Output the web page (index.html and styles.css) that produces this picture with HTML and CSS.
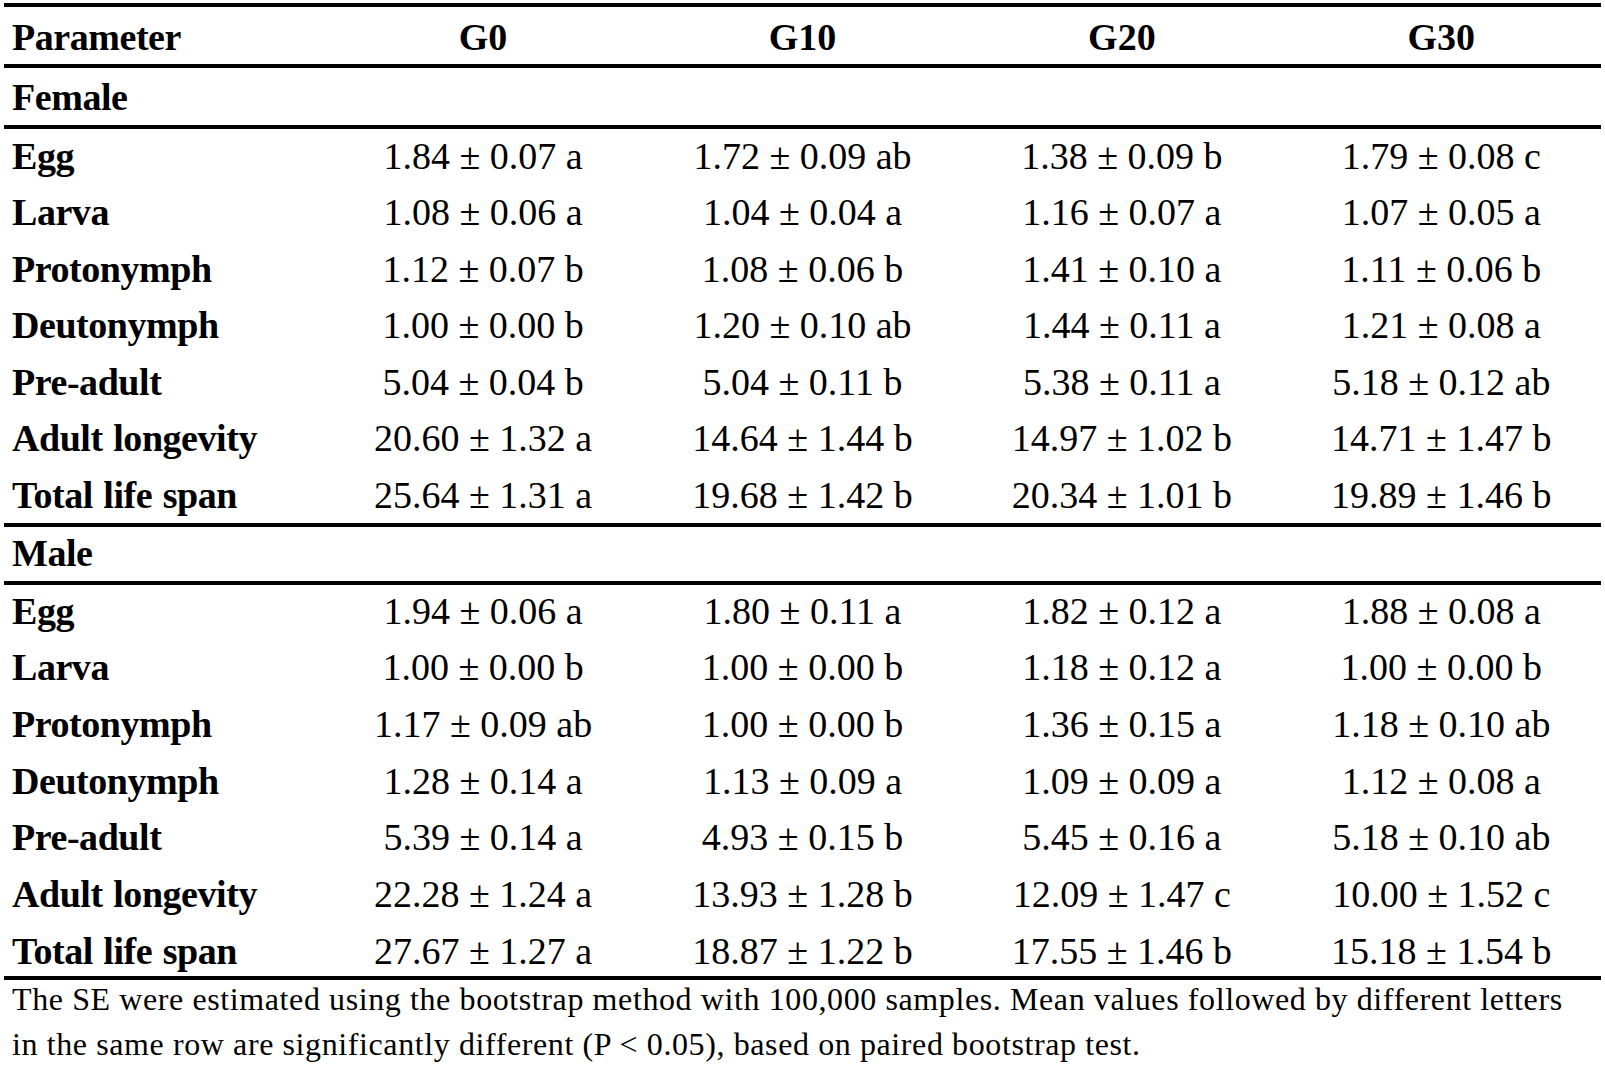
FILE: index.html
```html
<!DOCTYPE html>
<html>
<head>
<meta charset="utf-8">
<link rel="stylesheet" href="styles.css">
</head>
<body>
<div class="table">
  <div class="row head">
    <div class="c p">Parameter</div><div class="c">G0</div><div class="c">G10</div><div class="c">G20</div><div class="c">G30</div>
  </div>
  <div class="row group fem">
    <div class="c p">Female</div>
  </div>
  <div class="row f"><div class="c p">Egg</div><div class="c">1.84 ± 0.07 a</div><div class="c">1.72 ± 0.09 ab</div><div class="c">1.38 ± 0.09 b</div><div class="c">1.79 ± 0.08 c</div></div>
  <div class="row f"><div class="c p">Larva</div><div class="c">1.08 ± 0.06 a</div><div class="c">1.04 ± 0.04 a</div><div class="c">1.16 ± 0.07 a</div><div class="c">1.07 ± 0.05 a</div></div>
  <div class="row f"><div class="c p">Protonymph</div><div class="c">1.12 ± 0.07 b</div><div class="c">1.08 ± 0.06 b</div><div class="c">1.41 ± 0.10 a</div><div class="c">1.11 ± 0.06 b</div></div>
  <div class="row f"><div class="c p">Deutonymph</div><div class="c">1.00 ± 0.00 b</div><div class="c">1.20 ± 0.10 ab</div><div class="c">1.44 ± 0.11 a</div><div class="c">1.21 ± 0.08 a</div></div>
  <div class="row f"><div class="c p">Pre-adult</div><div class="c">5.04 ± 0.04 b</div><div class="c">5.04 ± 0.11 b</div><div class="c">5.38 ± 0.11 a</div><div class="c">5.18 ± 0.12 ab</div></div>
  <div class="row f"><div class="c p">Adult longevity</div><div class="c">20.60 ± 1.32 a</div><div class="c">14.64 ± 1.44 b</div><div class="c">14.97 ± 1.02 b</div><div class="c">14.71 ± 1.47 b</div></div>
  <div class="row f lastf"><div class="c p">Total life span</div><div class="c">25.64 ± 1.31 a</div><div class="c">19.68 ± 1.42 b</div><div class="c">20.34 ± 1.01 b</div><div class="c">19.89 ± 1.46 b</div></div>
  <div class="row group male">
    <div class="c p">Male</div>
  </div>
  <div class="row m"><div class="c p">Egg</div><div class="c">1.94 ± 0.06 a</div><div class="c">1.80 ± 0.11 a</div><div class="c">1.82 ± 0.12 a</div><div class="c">1.88 ± 0.08 a</div></div>
  <div class="row m"><div class="c p">Larva</div><div class="c">1.00 ± 0.00 b</div><div class="c">1.00 ± 0.00 b</div><div class="c">1.18 ± 0.12 a</div><div class="c">1.00 ± 0.00 b</div></div>
  <div class="row m"><div class="c p">Protonymph</div><div class="c">1.17 ± 0.09 ab</div><div class="c">1.00 ± 0.00 b</div><div class="c">1.36 ± 0.15 a</div><div class="c">1.18 ± 0.10 ab</div></div>
  <div class="row m"><div class="c p">Deutonymph</div><div class="c">1.28 ± 0.14 a</div><div class="c">1.13 ± 0.09 a</div><div class="c">1.09 ± 0.09 a</div><div class="c">1.12 ± 0.08 a</div></div>
  <div class="row m"><div class="c p">Pre-adult</div><div class="c">5.39 ± 0.14 a</div><div class="c">4.93 ± 0.15 b</div><div class="c">5.45 ± 0.16 a</div><div class="c">5.18 ± 0.10 ab</div></div>
  <div class="row m"><div class="c p">Adult longevity</div><div class="c">22.28 ± 1.24 a</div><div class="c">13.93 ± 1.28 b</div><div class="c">12.09 ± 1.47 c</div><div class="c">10.00 ± 1.52 c</div></div>
  <div class="row m lastm"><div class="c p">Total life span</div><div class="c">27.67 ± 1.27 a</div><div class="c">18.87 ± 1.22 b</div><div class="c">17.55 ± 1.46 b</div><div class="c">15.18 ± 1.54 b</div></div>
  <p class="note">The SE were estimated using the bootstrap method with 100,000 samples. Mean values followed by different letters in the same row are significantly different (P &lt; 0.05), based on paired bootstrap test.</p>
</div>
</body>
</html>
```
FILE: styles.css
```css
html, body {
  margin: 0;
  padding: 0;
  background: #fff;
}
body {
  font-family: "Liberation Serif", "Times New Roman", serif;
  color: #000;
}
.table {
  width: 1597px;
  margin: 3px 0 0 4px;
}
.row {
  display: grid;
  grid-template-columns: repeat(5, 1fr);
  align-items: start;
  font-size: 38px;
  line-height: 44px;
  box-sizing: border-box;
}
.c {
  text-align: center;
  white-space: nowrap;
}
.c.p {
  text-align: left;
  padding-left: 8px;
  font-weight: bold;
  letter-spacing: -0.45px;
  word-spacing: 1.5px;
}
.head {
  border-top: 4px solid #000;
  border-bottom: 4px solid #000;
  height: 65px;
  padding-top: 7.5px;
  font-weight: bold;
}
.fem {
  height: 61px;
  padding-top: 7px;
  border-bottom: 4px solid #000;
}
.f {
  height: 56.53px;
  padding-top: 4.5px;
}
.lastf {
  height: 54.8px;
}
.male {
  border-top: 4px solid #000;
  border-bottom: 4px solid #000;
  height: 62.5px;
  padding-top: 4.2px;
}
.m {
  height: 56.67px;
  padding-top: 3.3px;
}
.lastm {
  height: 55px;
  border-bottom: 4px solid #000;
}
.note {
  margin: -3.8px 0 0;
  padding: 0 30px 0 8px;
  font-size: 32px;
  letter-spacing: 0.6px;
  line-height: 45px;
}
```
